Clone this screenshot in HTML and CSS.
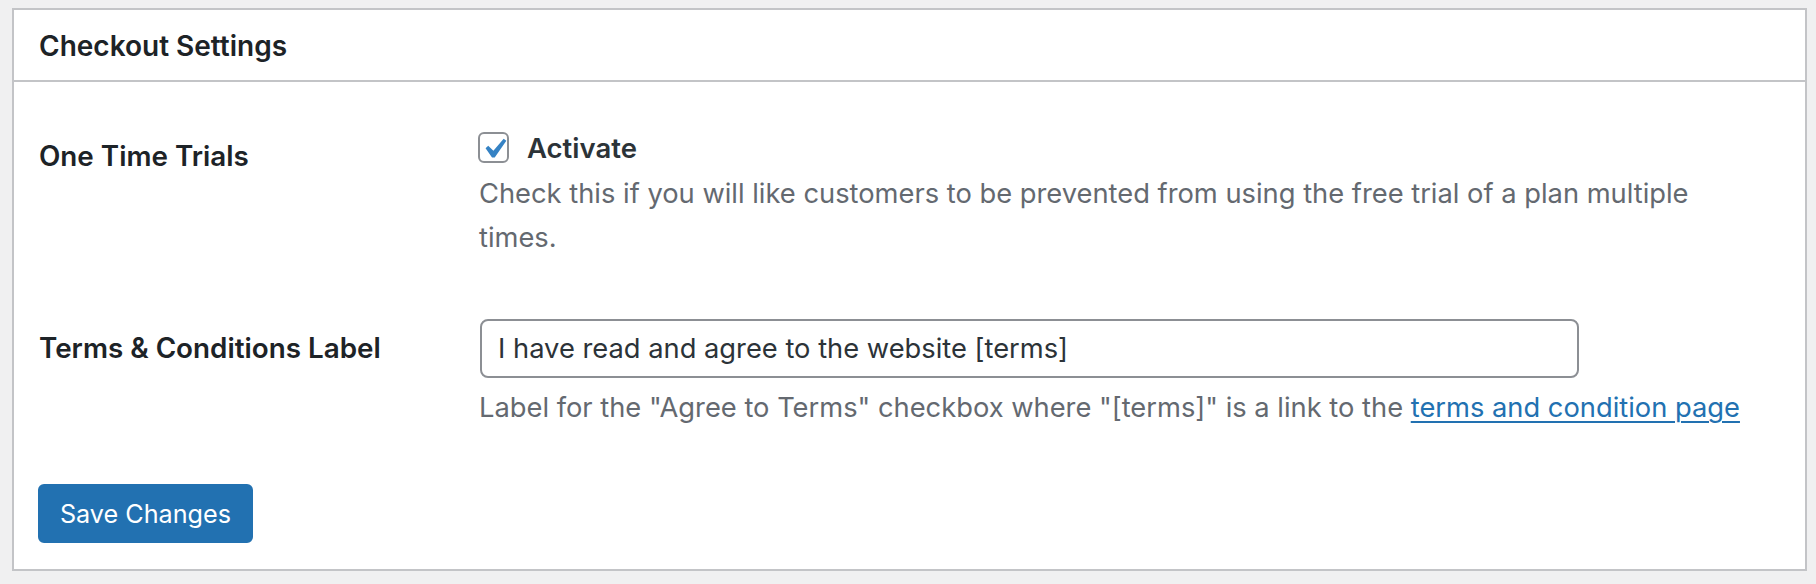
FILE: index.html
```html
<!DOCTYPE html>
<html lang="en">
<head>
<meta charset="utf-8">
<title>Checkout Settings</title>
<link rel="stylesheet" href="styles.css">
</head>
<body>
<div class="postbox">
  <div class="postbox-header">
    <h2 class="postbox-title">Checkout Settings</h2>
  </div>
  <form class="postbox-body">
    <div class="form-table">
      <div class="row row-trials">
        <div class="th">One Time Trials</div>
        <div class="td">
          <label class="check-line">
            <span class="checkbox">
              <svg class="checkmark" viewBox="0 0 20 20" aria-hidden="true"><path d="M14.83 4.89l1.34.94-5.81 8.38H9.02L5.78 9.67l1.34-1.25 2.57 2.4z"/></svg>
            </span>
            <span class="check-label">Activate</span>
          </label>
          <p class="description">Check this if you will like customers to be prevented from using the free trial of a plan multiple times.</p>
        </div>
      </div>
      <div class="row row-terms">
        <div class="th th-terms">Terms &amp; Conditions Label</div>
        <div class="td">
          <div class="text-input">I have read and agree to the website [terms]</div>
          <p class="description desc-terms">Label for the "Agree to Terms" checkbox where "[terms]" is a link to the <a href="#" class="link">terms and condition page</a></p>
        </div>
      </div>
    </div>
    <div class="submit">
      <button type="button" class="button-primary">Save Changes</button>
    </div>
  </form>
</div>
</body>
</html>
```

FILE: styles.css
```css
* { box-sizing: border-box; }

html, body {
  margin: 0;
  padding: 0;
}

body {
  background: #f0f0f1;
  font-family: "Inter", "Liberation Sans", sans-serif;
  color: #1d2327;
  padding: 8px 9px 0 12px;
}

.postbox {
  background: #fff;
  border: 2px solid #c3c4c7;
  width: 1795px;
}

.postbox-header {
  height: 72px;
  border-bottom: 2px solid #c3c4c7;
  display: flex;
  align-items: center;
  padding-left: 25px;
}

.postbox-title {
  margin: 0;
  font-size: 28px;
  font-weight: 600;
  line-height: 34px;
  padding-top: 2px;
  color: #1d2327;
}

.postbox-body {
  padding: 50px 0 26px 25px;
  margin: 0;
}

.form-table {
  display: flex;
  flex-direction: column;
}

.row {
  display: grid;
  grid-template-columns: 439px 1fr;
}

.row-trials {
  padding-bottom: 59px;
}

.th {
  font-size: 27.8px;
  font-weight: 600;
  line-height: 36px;
  padding-top: 6px;
  color: #1d2327;
}

.th-terms {
  padding-top: 11px;
}

.td {
  display: flex;
  flex-direction: column;
  align-items: flex-start;
}

.check-line {
  display: flex;
  align-items: center;
  height: 31px;
  gap: 18px;
}

.checkbox {
  position: relative;
  width: 31px;
  height: 31px;
  border: 2px solid #8c8f94;
  border-radius: 6px;
  background: #fff;
  flex: none;
}

.checkmark {
  position: absolute;
  left: -6px;
  top: -5px;
  width: 40px;
  height: 40px;
  fill: #3582c4;
}

.check-label {
  font-size: 27.5px;
  font-weight: 600;
  color: #2c3338;
  line-height: 34px;
}

.description {
  margin: 9px 0 0 1px;
  font-size: 27.3px;
  line-height: 44px;
  color: #646970;
  max-width: 1240px;
}

.desc-terms {
  max-width: none;
  margin-top: 8px;
}

.link {
  color: #2271b1;
  text-decoration: underline;
  text-underline-offset: 4px;
  text-decoration-thickness: 2px;
}

.text-input {
  width: 1099px;
  height: 59px;
  border: 2px solid #8c8f94;
  border-radius: 8px;
  padding-left: 16px;
  display: flex;
  align-items: center;
  font-size: 27.3px;
  color: #2c3338;
  margin-left: 2px;
}

.submit {
  padding-top: 54px;
}

.button-primary {
  margin: 0 0 0 -1px;
  height: 59px;
  width: 215px;
  background: #2271b1;
  border: 2px solid #2271b1;
  border-radius: 6px;
  color: #fff;
  font-family: "Inter", "Liberation Sans", sans-serif;
  font-size: 25.2px;
  padding: 0;
  cursor: pointer;
}
```
